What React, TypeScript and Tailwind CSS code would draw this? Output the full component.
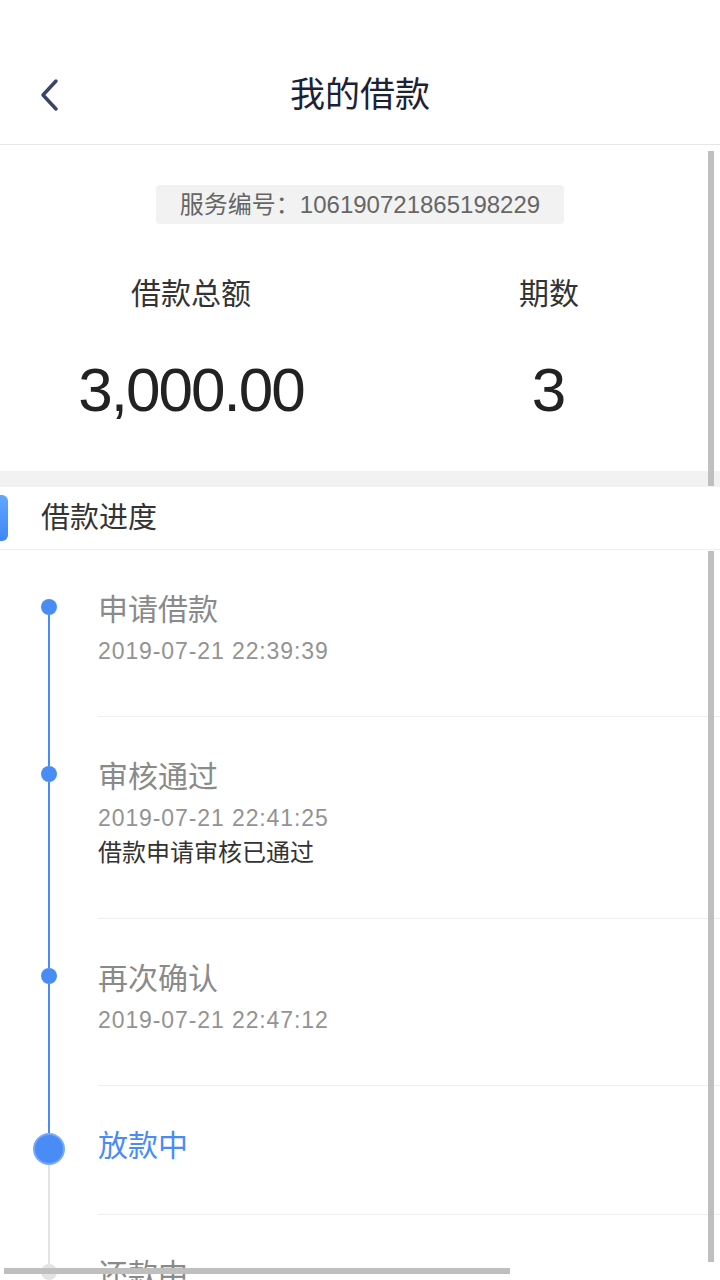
import React from "react";

type Step = {
  title: string;
  date?: string;
  desc?: string;
  state: "done" | "current" | "todo";
};

const steps: Step[] = [
  { title: "申请借款", date: "2019-07-21 22:39:39", state: "done" },
  {
    title: "审核通过",
    date: "2019-07-21 22:41:25",
    desc: "借款申请审核已通过",
    state: "done",
  },
  { title: "再次确认", date: "2019-07-21 22:47:12", state: "done" },
  { title: "放款中", state: "current" },
  { title: "还款中", state: "todo" },
];

function StepRow({ step, index }: { step: Step; index: number }) {
  const prev = index > 0 ? steps[index - 1] : null;
  // line above the dot is blue when the previous step is finished
  const topColor = !prev
    ? "bg-transparent"
    : prev.state === "done"
    ? "bg-[#4a8cf5]"
    : "bg-[#e3e3e3]";
  const bottomColor = step.state === "done" ? "bg-[#4a8cf5]" : "bg-[#e3e3e3]";
  const isCurrent = step.state === "current";

  return (
    <div className="flex">
      {/* timeline rail */}
      <div className="flex w-[98px] shrink-0 flex-col items-center">
        <div
          className={`w-[2px] ${isCurrent ? "h-[47px]" : "h-[49px]"} ${topColor}`}
        />
        {isCurrent ? (
          <div className="h-[32px] w-[32px] rounded-full border-2 border-[#78a9f8] bg-[#4a8cf5]" />
        ) : (
          <div
            className={`h-[16px] w-[16px] rounded-full ${
              step.state === "done" ? "bg-[#4a8cf5]" : "bg-[#e3e3e3]"
            }`}
          />
        )}
        <div className={`w-[2px] flex-1 ${bottomColor}`} />
      </div>

      {/* content */}
      <div className="flex-1 border-b border-[#efefef] pt-[42px] pb-[50px]">
        <div
          className={`text-[30px] leading-[36px] ${
            isCurrent ? "text-[#4a8cf5]" : "text-[#8a8a8a]"
          }`}
        >
          {step.title}
        </div>
        {step.date && (
          <div className="mt-[8px] text-[23px] leading-[30px] tracking-[0.9px] text-[#939393]">
            {step.date}
          </div>
        )}
        {step.desc && (
          <div className="mt-[5px] text-[24px] leading-[30px] text-[#333333]">
            {step.desc}
          </div>
        )}
      </div>
    </div>
  );
}

export default function App() {
  return (
    <div className="relative h-[1280px] w-[720px] overflow-hidden bg-white font-['Liberation_Sans','Noto_Sans_CJK_SC',sans-serif]">
      {/* Header */}
      <div className="h-[145px] border-b border-[#e6e6e6] pt-[70px]">
        <div className="grid h-[50px] grid-cols-[100px_1fr_100px] items-center">
          <div className="pl-[38px]">
            <svg width="22" height="36" viewBox="0 0 22 36" fill="none">
              <path
                d="M18 4 L5 18 L18 32"
                stroke="#3b4465"
                strokeWidth="3.5"
                strokeLinecap="round"
                strokeLinejoin="round"
              />
            </svg>
          </div>
          <h1 className="text-center text-[35px] leading-[50px] text-[#1b2236]">
            我的借款
          </h1>
          <div />
        </div>
      </div>

      {/* Summary */}
      <div className="flex flex-col items-center pt-[40px] pb-[43px]">
        <div className="rounded-[4px] bg-[#f2f2f2] px-[24px] text-[24px] leading-[39px] text-[#666666]">
          服务编号：106190721865198229
        </div>
        <div className="mt-[50px] grid w-full grid-cols-[382px_1fr] pr-[4px]">
          <div className="flex flex-col items-center">
            <div className="text-[30px] leading-[40px] text-[#333333]">借款总额</div>
            <div className="mt-[38px] text-[62px] leading-[76px] tracking-[-2px] text-[#222222]">
              3,000.00
            </div>
          </div>
          <div className="flex flex-col items-center">
            <div className="text-[30px] leading-[40px] text-[#333333]">期数</div>
            <div className="mt-[38px] text-[62px] leading-[76px] text-[#222222]">
              3
            </div>
          </div>
        </div>
      </div>

      <div className="h-[16px] bg-[#f2f2f2]" />

      {/* Section header */}
      <div className="flex h-[63px] items-center border-b border-[#efefef]">
        <div className="h-[46px] w-[8px] rounded-r-[6px] bg-gradient-to-b from-[#62a6ff] to-[#3f86f3]" />
        <div className="ml-[33px] text-[29px] leading-[40px] text-[#333333]">借款进度</div>
      </div>

      {/* Timeline */}
      <div className="flex flex-col">
        {steps.map((s, i) => (
          <StepRow key={s.title} step={s} index={i} />
        ))}
      </div>

      {/* scroll indicators */}
      <div className="absolute left-[708px] top-[151px] h-[335px] w-[6px] bg-[#bfbfbf]" />
      <div className="absolute left-[708px] top-[551px] h-[711px] w-[6px] bg-[#bfbfbf]" />
      <div className="absolute left-[4px] top-[1268px] h-[6px] w-[506px] bg-[#bfbfbf]" />
    </div>
  );
}
